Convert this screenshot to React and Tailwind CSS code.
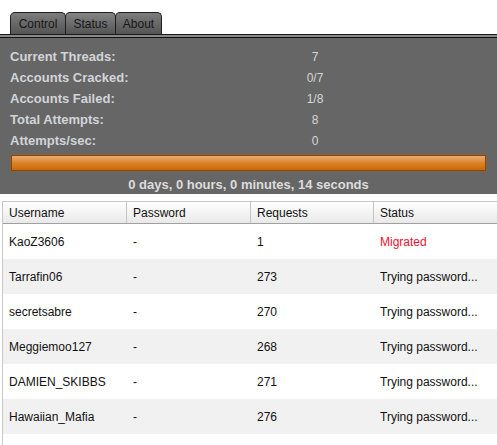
import React from 'react';

const stats = [
  ['Current Threads:', '7'],
  ['Accounts Cracked:', '0/7'],
  ['Accounts Failed:', '1/8'],
  ['Total Attempts:', '8'],
  ['Attempts/sec:', '0'],
];

const rows = [
  { user: 'KaoZ3606', pass: '-', req: '1', status: 'Migrated' },
  { user: 'Tarrafin06', pass: '-', req: '273', status: 'Trying password...' },
  { user: 'secretsabre', pass: '-', req: '270', status: 'Trying password...' },
  { user: 'Meggiemoo127', pass: '-', req: '268', status: 'Trying password...' },
  { user: 'DAMIEN_SKIBBS', pass: '-', req: '271', status: 'Trying password...' },
  { user: 'Hawaiian_Mafia', pass: '-', req: '276', status: 'Trying password...' },
];

const tabs = [
  { label: 'Control', w: 'w-[56px]' },
  { label: 'Status', w: 'w-[51px]' },
  { label: 'About', w: 'w-[47px]' },
];

const App = () => {
  return (
    <div className="w-[497px] h-[445px] bg-white overflow-hidden font-['Liberation_Sans',Arial,sans-serif]">
      {/* tab strip */}
      <div className="h-[12px]" />
      <div className="flex pl-[10px] h-[23px] border-b border-[#1a1a1a]">
        {tabs.map((t, i) => (
          <div
            key={t.label}
            className={`${t.w} h-[22px] ${i > 0 ? '-ml-px' : ''} border border-b-0 border-[#1e1e1e] rounded-t-[5px] bg-gradient-to-b ${
              i === 1 ? 'from-[#858585] to-[#545454]' : 'from-[#7c7c7c] to-[#555555]'
            } flex items-center justify-center text-[12px] text-[#161616]`}
          >
            {t.label}
          </div>
        ))}
      </div>
      <div className="h-[2px] bg-[#8a8a8a]" />
      <div className="h-px bg-[#111]" />

      {/* stats panel */}
      <div className="bg-[#666666] pt-[8px] h-[156px]">
        {stats.map(([label, value]) => (
          <div key={label} className="flex h-[21px] items-center">
            <div className="w-[270px] pl-[10px] text-[13px] font-bold text-[#d2d4d8]">{label}</div>
            <div className="w-[90px] text-center text-[12px] text-[#d6d6d6]">{value}</div>
          </div>
        ))}
        <div className="mx-[11px] mt-[4px] h-[16px] border border-[#8a4508] bg-gradient-to-b from-[#e8ab73] via-[#dc8425] to-[#c9680c] shadow-[0_0_2px_#b86010]" />
        <div className="mt-[4px] h-[20px] flex items-center justify-center text-[13px] font-bold text-[#dcdcdc]">
          0 days, 0 hours, 0 minutes, 14 seconds
        </div>
      </div>

      {/* table */}
      <div className="mt-[7px] ml-[2px] border-l border-t border-[#c8c8c8]">
        <div className="grid grid-cols-[124px_124px_123px_124px] h-[22px] border-b border-[#a0a0a0] bg-gradient-to-b from-white to-[#e9e9e9] text-[12px] text-[#111]">
          {['Username', 'Password', 'Requests', 'Status'].map((h, i) => (
            <div key={h} className={`flex items-center pl-[6px] ${i < 3 ? 'border-r border-[#c4c4c4]' : ''}`}>
              {h}
            </div>
          ))}
        </div>
        {rows.map((r, i) => (
          <div
            key={r.user}
            className={`grid grid-cols-[124px_124px_123px_124px] h-[35px] items-center text-[12px] text-[#111] ${
              i % 2 === 1 ? 'bg-[#f1f1f1]' : 'bg-white'
            }`}
          >
            <div className="pl-[6px]">{r.user}</div>
            <div className="pl-[6px]">{r.pass}</div>
            <div className="pl-[6px]">{r.req}</div>
            <div className={`pl-[6px] ${r.status === 'Migrated' ? 'text-[#ee1133]' : ''}`}>{r.status}</div>
          </div>
        ))}
        <div className="h-[12px]" />
      </div>
    </div>
  );
};

export default App;
